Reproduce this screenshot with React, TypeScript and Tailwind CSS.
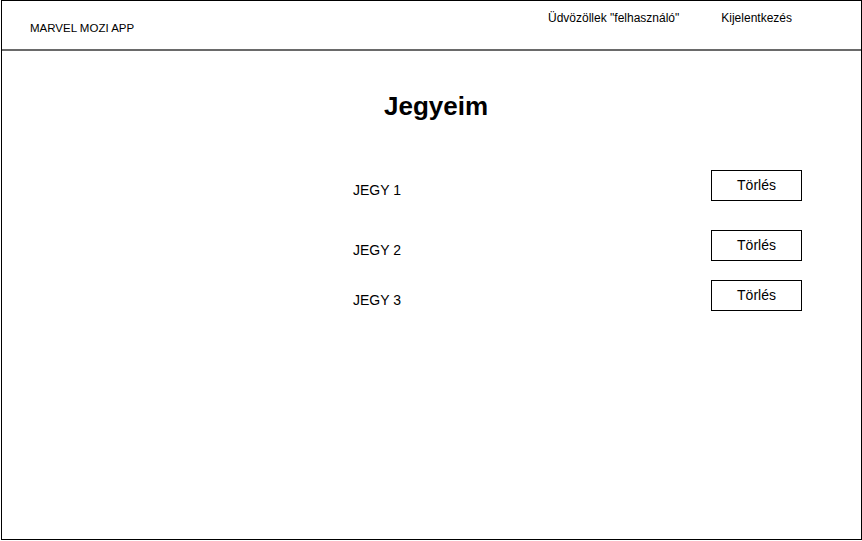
import React from "react";

const rows = [
  { label: "JEGY 1", mt: "mt-[49px]" },
  { label: "JEGY 2", mt: "mt-[29px]" },
  { label: "JEGY 3", mt: "mt-[19px]" },
];

export default function App() {
  return (
    <div className="bg-white w-[862px] h-[541px]" style={{ fontFamily: '"Liberation Sans", Arial, sans-serif' }}>
      <div className="ml-[1px] w-[861px] h-[540px] border border-black flex flex-col text-black">
        <header className="h-[50px] border-b-2 border-[#6a6a6a] flex items-start shrink-0">
          <div className="ml-[28px] mt-[20px] text-[11.5px] leading-[14px]">MARVEL MOZI APP</div>
          <div className="ml-auto mr-[69px] mt-[10px] flex gap-[42px] text-[12px] leading-[14px]">
            <span>Üdvözöllek "felhasználó"</span>
            <span>Kijelentkezés</span>
          </div>
        </header>
        <main className="flex flex-col">
          <h1 className="ml-[382px] mt-[40px] text-[26px] leading-[30px] font-bold">Jegyeim</h1>
          {rows.map((r) => (
            <div key={r.label} className={`flex items-start ml-[351px] w-[449px] ${r.mt}`}>
              <span className="mt-[12px] text-[14px] leading-[16px]">{r.label}</span>
              <button className="ml-auto w-[91px] h-[31px] border border-black bg-white text-[14px] leading-[16px] pb-[2px]">
                Törlés
              </button>
            </div>
          ))}
        </main>
      </div>
    </div>
  );
}
